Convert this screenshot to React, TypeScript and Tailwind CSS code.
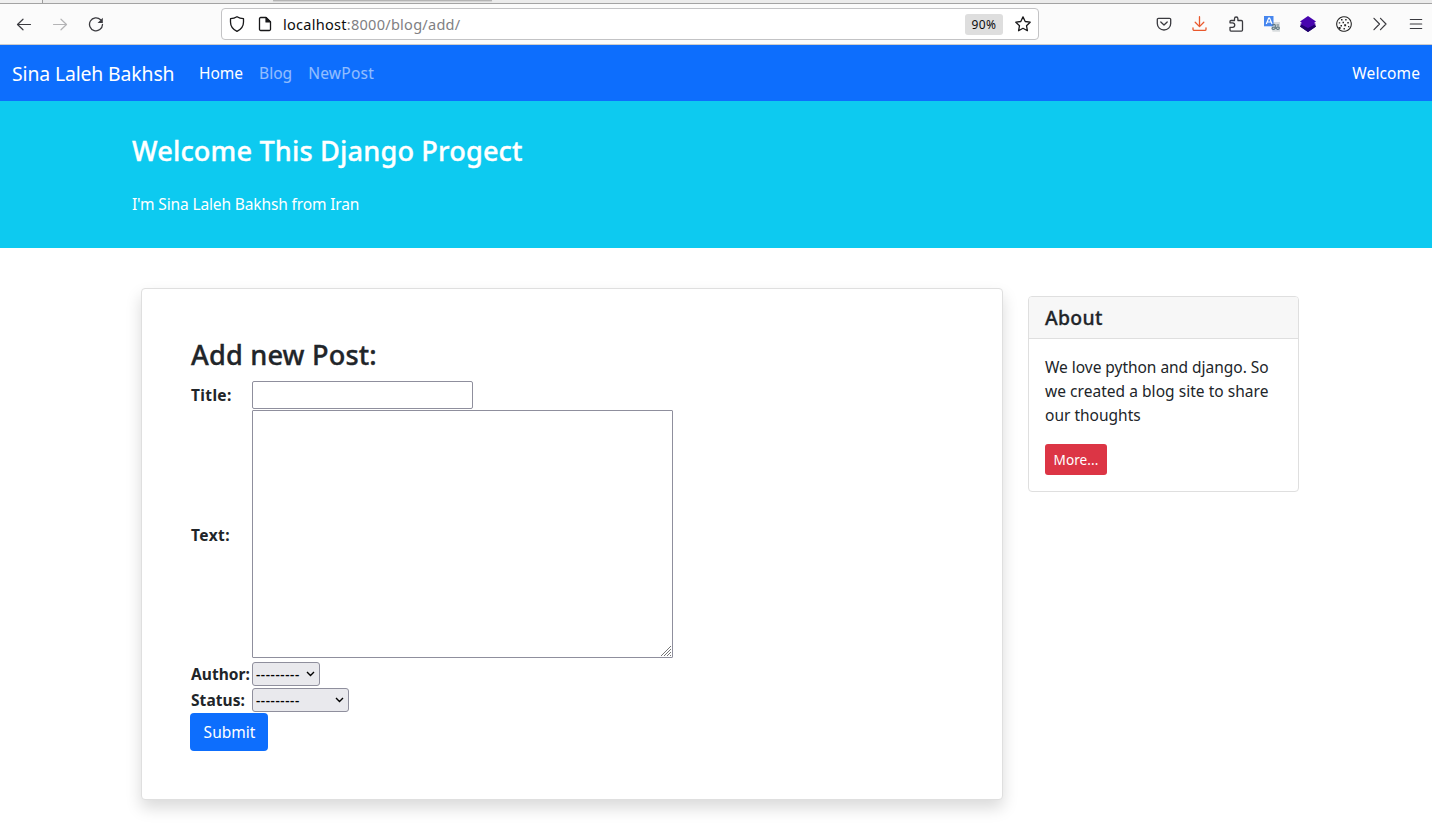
import type { ReactNode } from "react";

function Icon({ children, size = 16, className = "" }: { children: ReactNode; size?: number; className?: string }) {
  return (
    <svg
      width={size}
      height={size}
      viewBox="0 0 16 16"
      fill="none"
      stroke="currentColor"
      strokeWidth="1.2"
      strokeLinecap="round"
      strokeLinejoin="round"
      className={`shrink-0 ${className}`}
    >
      {children}
    </svg>
  );
}

function TabStrip() {
  return (
    <div className="flex h-[4px] border-b border-[#a3a3a3] bg-[#ebebeb]">
      <div className="w-[43px] border-r border-[#9c9c9c] bg-[#f0f0f0]" />
      <div className="ml-[230px] h-px w-[219px] bg-[#b4b4b4] shadow-[0_1px_1px_#d0d0d0]" />
    </div>
  );
}

function Toolbar() {
  return (
    <div className="flex h-[41px] items-center border-b border-[#cccccc] bg-[#fbfbfb] pr-[8px] pl-[16px] text-[#3a3a3f]">
      <div className="flex items-center gap-[20px]">
        <Icon>
          <path d="M14.5 8.500H1.500M7 3.200 1.500 8.500 7 13.800" />
        </Icon>
        <Icon className="text-[#b4b4b6]">
          <path d="M1.500 8.500h13M9 3.200 14.500 8.500 9 13.800" />
        </Icon>
        <Icon>
          <path d="M12.600 3.700A6.500 6.500 0 1 0 14.500 8.500" strokeWidth="1.300" />
          <path d="M14.800 1.800v5.200H9.600z" fill="currentColor" stroke="none" />
        </Icon>
      </div>

      <div className="ml-[117px] flex h-[32px] w-[818px] items-center rounded-[4px] border border-[#c3c3c5] bg-white pr-[7px] pl-[7px] text-[#18181a]">
        <Icon>
          <path
            d="M8 .7c2 1.3 4 1.9 6.5 2v3.2c0 4.2-2.6 7.5-6.5 9.4C4.1 13.4 1.500 10.100 1.500 5.900V2.700C4 2.600 6 2 8 .7z"
            strokeWidth="1.3"
          />
        </Icon>
        <Icon className="ml-[12px]">
          <path
            d="M3.700 1.500h5.300l4.500 4.500v7.300a1.200 1.200 0 0 1-1.200 1.200H3.700a1.200 1.200 0 0 1-1.200-1.200V2.700a1.200 1.200 0 0 1 1.200-1.200z"
            strokeWidth="1.3"
          />
          <path d="M9 1.500 13.500 6H9z" fill="currentColor" />
        </Icon>
        <div className="ml-[10px] flex-1 text-[14.55px] leading-[20px] whitespace-nowrap text-[#808083]">
          <span className="tracking-[0.26px] text-[#0c0c0d]">localhost</span>
          <span className="tracking-[0.25px]">:8000/blog/add/</span>
        </div>
        <div className="flex h-[21px] w-[38px] items-center justify-center rounded-[3px] bg-[#dedede] pt-px text-[12px] tracking-[0.5px] text-[#0c0c0d]">
          90%
        </div>
        <Icon className="ml-[12px]">
          <path
            d="m8 .9 2.200 4.600 5 .7-3.700 3.500.9 5L8 12.300l-4.400 2.400.9-5L.8 6.200l5-.7z"
            strokeWidth="1.3"
          />
        </Icon>
      </div>

      <div className="ml-auto flex items-center gap-[20px]">
        <Icon>
          <path
            d="M2.500 2.300h11a1.200 1.200 0 0 1 1.200 1.200v4A6.700 6.500 0 0 1 1.300 7.500v-4a1.200 1.200 0 0 1 1.200-1.200z"
            strokeWidth="1.3"
          />
          <path d="m4.800 6 3.200 3 3.200-3" strokeWidth="1.3" />
        </Icon>
        <Icon className="text-[#e9582c]">
          <path
            d="M7.500.7v9.700M3.200 6.300 7.500 10.600l4.300-4.300M1 11.800v1.400a1.200 1.200 0 0 0 1.200 1.200h10.600a1.200 1.200 0 0 0 1.200-1.200v-1.400"
            strokeWidth="1.3"
          />
        </Icon>
        <Icon>
          <path
            d="M2 6.800V5.500a1 1 0 0 1 1-1h3.500V2.700a1.700 1.700 0 0 1 3.400 0v1.800h3.400a1.200 1.200 0 0 1 1.200 1.200v8.400a1 1 0 0 1-1 1H3a1 1 0 0 1-1-1v-2.800h2.500a1.900 1.900 0 0 0 0-4.500z"
            strokeWidth="1.3"
          />
        </Icon>
        <svg width="16" height="16" viewBox="0 0 16 16" className="shrink-0">
          <path d="M6.500 6H16v9.700H8.500z" fill="#d8dcde" />
          <path d="M0 0h9.500v10.300H0z" fill="#4686ee" />
          <path d="m2.300 8 2.400-6h.9L8 8M3.200 6h3.900" fill="none" stroke="#fff" strokeWidth="1.2" />
          <path
            d="M8.300 9.500c1-1.500 3-1.500 3 0v3.500M11 11c-1.500 0-3 .5-3 1.500s2 1.500 3 0M12.500 9h2.500M12.500 12c0-1.500 2.800-1.500 2.800 0 0 2-2.800 2-2.800 0z"
            fill="none"
            stroke="#607984"
            strokeWidth="1.2"
          />
        </svg>
        <svg width="16" height="16" viewBox="0 0 16 16" className="shrink-0">
          <path d="M0 10.500 2.500 8h11l2.500 2.500L8 16z" fill="#21006f" />
          <path d="M8 0l8 5.500-2 1.500 2 1-8 5-8-5 2-1-2-1.500z" fill="#4705af" />
          <path d="M1 8.500 8 12l7-3.500 1 2L8 16 0 10.500z" fill="#21006f" />
        </svg>
        <Icon className="text-[#252525]">
          <circle cx="8" cy="8" r="7.300" strokeWidth="1.1" strokeDasharray="2.500 .6" />
          <path
            d="M5 3h1.500v1.500H5zM9.200 3h1.400v1.400H9.200zM2.800 6.200h1.400v1.400H2.800zM6.500 5.800h1.500v1.500H6.500zM11.300 6h1.500v1.500h-1.500zM8.200 8.300h1.900v1.900H8.200zM4.500 9h1.500v1.500H4.500zM12 10h1.300v1.300H12zM7.500 12h1.400v1.400H7.500zM2.200 11h2.400v2h-1.400z"
            fill="currentColor"
            stroke="none"
          />
        </Icon>
        <Icon>
          <path d="M2 2.300 7.500 8 2 13.700M8.500 2.300 14 8l-5.500 5.700" />
        </Icon>
        <Icon>
          <path d="M2.300 3.500h11.400M2.300 8h11.400M2.300 12.500h11.400" />
        </Icon>
      </div>
    </div>
  );
}

function Navbar() {
  return (
    <nav className="flex h-[56px] items-center bg-[#0d6efd] px-[12px] text-[15.52px] text-white">
      <a className="pt-px text-[19.4px] leading-[30px] tracking-[-0.13px]">Sina Laleh Bakhsh</a>
      <div className="ml-[24.5px] flex gap-[16px] leading-[24px]">
        <a>Home</a>
        <a className="text-white/55">Blog</a>
        <a className="tracking-[0.25px] text-white/55">NewPost</a>
      </div>
      <span className="ml-auto leading-[24px] tracking-[0.1px]">Welcome</span>
    </nav>
  );
}

function Hero() {
  return (
    <header className="h-[147px] bg-[#0dcaf0] pt-[33px] pl-[132px] text-white">
      <h1 className="text-[27.16px] leading-[34px] font-medium tracking-[0.15px] [-webkit-text-stroke:0.35px_currentColor]">
        Welcome This Django Progect
      </h1>
      <p className="mt-[24px] text-[15.52px] leading-[24px] tracking-[-0.14px]">I'm Sina Laleh Bakhsh from Iran</p>
    </header>
  );
}

function SelectBox({ className }: { className: string }) {
  return (
    <button
      type="button"
      className={`flex h-[24px] items-center justify-between rounded-[3px] border border-[#8f8f9d] bg-[#e9e9ed] pr-[4px] pl-[3px] text-[13.33px] leading-[20px] text-black ${className}`}
    >
      <span className="font-semibold tracking-[0.6px]">---------</span>
      <svg width="9" height="6" viewBox="0 0 9 6" fill="none" stroke="#000" strokeWidth="1.4">
        <path d="M1 1l3.500 3.500L8 1" />
      </svg>
    </button>
  );
}

function PostForm() {
  return (
    <section className="h-[512px] w-[862px] rounded-[4px] border border-[#dfdfdf] bg-white pt-[49px] pl-[48px] shadow-[0_8px_16px_rgba(0,0,0,0.15)]">
      <h2 className="pl-px text-[27.16px] leading-[34px] font-medium tracking-[0.17px] [-webkit-text-stroke:0.35px_currentColor]">
        Add new Post:
      </h2>
      <div className="mt-[9px] grid grid-cols-[61px_auto] grid-rows-[28px_250px_28px_26px] items-center pl-px text-[15.52px] leading-[24px] font-bold">
        <label className="tracking-[0.35px]">Title:</label>
        <input className="h-[28px] w-[221px] rounded-[2px] border border-[#8f8f9d] bg-white px-1 font-normal" />
        <label className="pt-[2px] tracking-[0.42px]">Text:</label>
        <div className="relative h-[248px] w-[421px]">
          <textarea className="block h-full w-full resize-none rounded-[1px] border border-[#8f8f9d] bg-white p-1 font-normal" />
          <svg
            className="absolute right-[2px] bottom-[2px]"
            width="10"
            height="10"
            viewBox="0 0 10 10"
            stroke="#777"
            strokeWidth="1"
          >
            <path d="M0 10 10 0M3 10l7-7M6 10l4-4M9 10l1-1" />
          </svg>
        </div>
        <label className="pt-[2px] whitespace-nowrap tracking-[0.05px]">Author:</label>
        <SelectBox className="mt-[2px] w-[68px]" />
        <label className="tracking-[0.07px]">Status:</label>
        <SelectBox className="w-[97px]" />
      </div>
      <button
        type="button"
        className="h-[38px] w-[78px] rounded-[4px] bg-[#0d6efd] pl-px text-[15.52px] leading-[24px] text-white"
      >
        Submit
      </button>
    </section>
  );
}

function AboutCard() {
  return (
    <aside className="mt-[8px] h-[196px] w-[271px] rounded-[4px] border border-[#dfdfdf] bg-white">
      <h5 className="flex h-[42px] items-center rounded-t-[3px] border-b border-[#dfdfdf] bg-[#f7f7f7] pl-[16px] text-[19.4px] leading-[24px] font-medium tracking-[0.3px] [-webkit-text-stroke:0.3px_currentColor]">
        About
      </h5>
      <div className="pt-[16px] pl-[16px]">
        <p className="text-[15.52px] leading-[24px] whitespace-nowrap">
          <span className="block tracking-[-0.04px]">We love python and django. So</span>
          <span className="block tracking-[0.03px]">we created a blog site to share</span>
          <span className="block">our thoughts</span>
        </p>
        <button
          type="button"
          className="mt-[17px] block h-[31px] w-[62px] rounded-[3px] bg-[#dc3545] text-[13.58px] leading-[21px] tracking-[0.08px] text-white"
        >
          More...
        </button>
      </div>
    </aside>
  );
}

export default function App() {
  return (
    <div className="h-[823px] w-[1432px] overflow-hidden bg-white font-['Noto_Sans',sans-serif] text-[#212529]">
      <TabStrip />
      <Toolbar />
      <Navbar />
      <Hero />
      <main className="flex items-start gap-[25px] pt-[40px] pl-[141px]">
        <PostForm />
        <AboutCard />
      </main>
    </div>
  );
}
